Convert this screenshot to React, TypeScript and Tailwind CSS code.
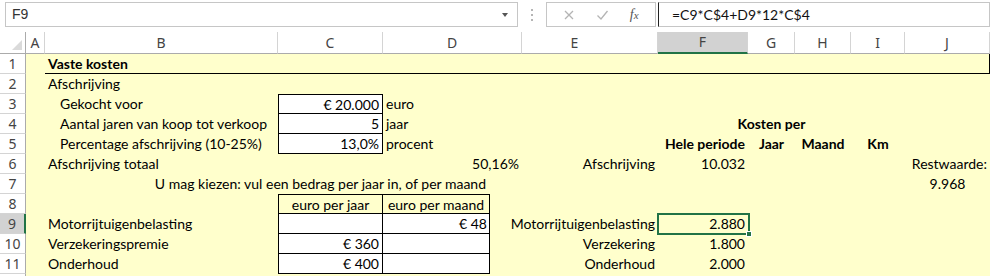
import React from "react";

type Cell = {
  t?: string;
  a?: "l" | "r" | "c";
  b?: boolean;
  indent?: boolean;
  white?: boolean;
  bt?: boolean;
  bl?: boolean;
  box?: boolean;
  inner?: boolean;
  under?: boolean;
  rightLine?: boolean;
  sel?: boolean;
  pr?: string;
};

const colW = [
  "w-[19px]",
  "w-[233px]",
  "w-[105px]",
  "w-[139px]",
  "w-[136px]",
  "w-[90px]",
  "w-[47px]",
  "w-[56px]",
  "w-[54px]",
  "w-[85px]",
];
const letters = ["A", "B", "C", "D", "E", "F", "G", "H", "I", "J"];

const u: Cell = { under: true };

const rows: Record<number, Cell>[] = [
  // 1
  {
    1: { t: "Vaste kosten", b: true, under: true },
    2: u, 3: u, 4: u, 5: u, 6: u, 7: u, 8: u,
    9: { under: true, rightLine: true },
  },
  // 2
  { 1: { t: "Afschrijving" } },
  // 3
  {
    1: { t: "Gekocht voor", indent: true },
    2: { t: "€ 20.000", a: "r", white: true, box: true, bt: true, bl: true },
    3: { t: "euro" },
  },
  // 4
  {
    1: { t: "Aantal jaren van koop tot verkoop", indent: true },
    2: { t: "5", a: "r", white: true, box: true, bl: true },
    3: { t: "jaar" },
    6: { t: "Kosten per", a: "c", b: true },
  },
  // 5
  {
    1: { t: "Percentage afschrijving (10-25%)", indent: true },
    2: { t: "13,0%", a: "r", white: true, box: true, bl: true },
    3: { t: "procent" },
    5: { t: "Hele periode", a: "r", b: true },
    6: { t: "Jaar", a: "c", b: true },
    7: { t: "Maand", a: "c", b: true },
    8: { t: "Km", a: "c", b: true },
  },
  // 6
  {
    1: { t: "Afschrijving totaal" },
    3: { t: "50,16%", a: "r" },
    4: { t: "Afschrijving", a: "r" },
    5: { t: "10.032", a: "r" },
    9: { t: "Restwaarde:", a: "r" },
  },
  // 7
  {
    3: { t: "U mag kiezen: vul een bedrag per jaar in, of per maand", a: "r", pr: "pr-[36px]" },
    9: { t: "9.968", a: "c" },
  },
  // 8
  {
    2: { t: "euro per jaar", a: "c", box: true, bt: true, bl: true },
    3: { t: "euro per maand", inner: true, bt: true },
  },
  // 9
  {
    1: { t: "Motorrijtuigenbelasting" },
    2: { white: true, box: true, bl: true },
    3: { t: "€ 48", inner: true, white: true },
    4: { t: "Motorrijtuigenbelasting", a: "r" },
    5: { t: "2.880", a: "r", sel: true },
  },
  // 10
  {
    1: { t: "Verzekeringspremie" },
    2: { t: "€ 360", a: "r", white: true, box: true, bl: true },
    3: { inner: true, white: true },
    4: { t: "Verzekering", a: "r" },
    5: { t: "1.800", a: "r" },
  },
  // 11
  {
    1: { t: "Onderhoud" },
    2: { t: "€ 400", a: "r", white: true, box: true, bl: true },
    3: { inner: true, white: true },
    4: { t: "Onderhoud", a: "r" },
    5: { t: "2.000", a: "r" },
  },
  // 12 (only its top edge is in view)
  {},
];

function GridCell({ c, w }: { c?: Cell; w: string }) {
  const cell = c ?? {};

  // box in column D is narrower than the column itself
  if (cell.inner) {
    return (
      <div className={`${w} h-[20px] shrink-0 flex`}>
        <div
          className={[
            "w-[107px] h-[20px] flex border-r border-b border-black whitespace-nowrap",
            cell.bt ? "border-t" : "",
            cell.white ? "bg-white" : "",
            cell.t === "€ 48" ? "justify-end pr-[2px]" : "justify-center",
          ].join(" ")}
        >
          {cell.t}
        </div>
      </div>
    );
  }

  const align =
    cell.a === "r"
      ? `justify-end ${cell.pr ?? "pr-[3px]"}`
      : cell.a === "c"
      ? "justify-center"
      : cell.indent
      ? "justify-start pl-[15px]"
      : "justify-start pl-[3px]";
  return (
    <div
      className={[
        w,
        "relative h-[20px] shrink-0 flex items-start whitespace-nowrap",
        align,
        cell.white ? "bg-white" : "",
        cell.box ? "border-r border-b border-black" : "",
        cell.bt ? "border-t border-black" : "",
        cell.bl ? "border-l border-black" : "",
        cell.under ? "border-b border-black" : "",
        cell.rightLine ? "border-r border-black" : "",
        cell.b ? "font-bold" : "",
      ].join(" ")}
    >
      {cell.t}
      {cell.sel && (
        <div className="absolute left-[-1px] top-[-1px] right-[-2px] bottom-[-1px] border-2 border-[#217346]">
          <div className="absolute right-[-4px] bottom-[-4px] w-[6px] h-[6px] bg-[#217346] border border-white" />
        </div>
      )}
    </div>
  );
}

export default function App() {
  return (
    <div className="w-[990px] h-[276px] overflow-hidden bg-white font-['Lato','Liberation_Sans',sans-serif]">
      {/* formula bar */}
      <div className="h-[32px] flex items-start pt-[2px] text-[14px] text-[#222]">
        <div className="ml-[5px] w-[513px] h-[25px] border border-[#c6c6c6] flex items-center justify-between pl-[6px] pr-[9px]">
          <span className="font-['Liberation_Sans',sans-serif] text-[14px] text-[#333]">F9</span>
          <span className="w-0 h-0 border-l-[3px] border-r-[3px] border-t-[4px] border-l-transparent border-r-transparent border-t-[#555]" />
        </div>
        <div className="w-[28px] h-[25px] flex flex-col items-center justify-center gap-[3px]">
          <span className="w-[2px] h-[2px] bg-[#b5b5b5]" />
          <span className="w-[2px] h-[2px] bg-[#b5b5b5]" />
          <span className="w-[2px] h-[2px] bg-[#b5b5b5]" />
        </div>
        <div className="w-[110px] h-[25px] border border-[#c6c6c6] flex items-center justify-around px-[6px]">
          <svg width="12" height="12" viewBox="0 0 12 12">
            <path d="M2 2 L10 10 M10 2 L2 10" stroke="#b4b4b4" strokeWidth="1.3" />
          </svg>
          <svg width="13" height="12" viewBox="0 0 13 12">
            <path d="M1.5 6.5 L5 10 L11.5 2" stroke="#b4b4b4" strokeWidth="1.3" fill="none" />
          </svg>
          <span className="italic font-['Liberation_Serif',serif] text-[14px] text-[#555]">
            f<span className="text-[11px]">x</span>
          </span>
        </div>
        <div className="ml-[2px] flex-1 h-[25px] border border-[#c6c6c6] border-l-[#222] flex items-center pl-[13px] text-[14px] text-[#111]">
          =C9*C$4+D9*12*C$4
        </div>
      </div>

      {/* column headers */}
      <div className="flex h-[22px] font-['Noto_Sans',sans-serif] text-[14px] text-[#444] bg-white">
        <div className="w-[26px] shrink-0 border-r border-b border-[#ababab] relative">
          <svg className="absolute right-[3px] bottom-[3px]" width="10" height="10" viewBox="0 0 10 10">
            <path d="M10 0 L10 10 L0 10 Z" fill="#dadada" />
          </svg>
        </div>
        {letters.map((l, i) => (
          <div
            key={l}
            className={[
              colW[i],
              "shrink-0 flex items-center justify-center border-r border-[#d4d4d4] leading-none",
              l === "E" ? "pr-[30px]" : "",
              l === "F" ? "bg-[#d2d2d2] border-b-2 border-b-[#217346]" : "border-b border-b-[#ababab]",
            ].join(" ")}
          >
            {l}
          </div>
        ))}
      </div>

      {/* rows */}
      {rows.map((r, ri) => (
        <div key={ri} className="flex h-[20px]">
          <div
            className={[
              "w-[26px] shrink-0 flex items-center justify-center font-['Noto_Sans',sans-serif] text-[14px] text-[#444] border-b border-[#d4d4d4] leading-none",
              ri === 8 ? "bg-[#d2d2d2] border-r-2 border-r-[#217346]" : "bg-white border-r border-r-[#ababab]",
            ].join(" ")}
          >
            {ri < 11 ? ri + 1 : ""}
          </div>
          <div className="flex bg-[#ffffcc] text-[14px] leading-[20px] text-black">
            {colW.map((w, ci) => (
              <GridCell key={ci} c={r[ci]} w={w} />
            ))}
          </div>
        </div>
      ))}
    </div>
  );
}
